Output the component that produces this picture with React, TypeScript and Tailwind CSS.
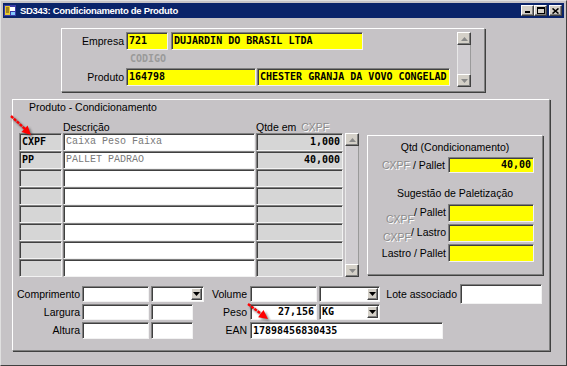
import React from 'react';

const sans = "font-['Liberation_Sans',Arial,sans-serif]";
const mono = "font-['DejaVu_Sans_Mono',monospace]";
const sunken =
  'border border-t-[#808080] border-l-[#808080] border-b-[#f2f2f2] border-r-[#f2f2f2] shadow-[inset_1px_1px_0_#404040]';
const raised =
  'border border-t-[#ffffff] border-l-[#ffffff] border-b-[#404040] border-r-[#404040] shadow-[inset_-1px_-1px_0_#808080]';
const groupBox =
  'border border-t-[#ffffff] border-l-[#ffffff] border-b-[#808080] border-r-[#808080] shadow-[1px_1px_0_#404040]';
const dim = 'text-[#8c8c8c] [text-shadow:1px_1px_0_#ffffff]';

const ROWS = [
  { code: 'CXPF', desc: 'Caixa Peso Faixa', qtd: '1,000' },
  { code: 'PP', desc: 'PALLET PADRAO', qtd: '40,000' },
  {},
  {},
  {},
  {},
  {},
  {},
] as { code?: string; desc?: string; qtd?: string }[];

function Field({ className = '', right = false, children }: { className?: string; right?: boolean; children?: React.ReactNode }) {
  return (
    <div
      className={`${sunken} ${className} flex items-center ${right ? 'justify-end' : ''} overflow-hidden whitespace-nowrap px-[2px] ${mono} text-[10px] font-bold text-black leading-none`}
    >
      {children}
    </div>
  );
}

function DropBtn() {
  return (
    <div className={`${raised} bg-[#d4d0c8] w-[11px] h-[12px] flex items-center justify-center shrink-0`}>
      <svg width="7" height="4" viewBox="0 0 7 4">
        <path d="M0 0h7L3.5 4z" fill="#000" />
      </svg>
    </div>
  );
}

function Select({ className = '', value = '' }: { className?: string; value?: string }) {
  return (
    <div className={`${sunken} ${className} bg-white flex items-center justify-between pl-[2px] pr-[1px]`}>
      <span className={`${mono} text-[10px] font-bold leading-none`}>{value}</span>
      <DropBtn />
    </div>
  );
}

function ScrollBtn({ up = false }: { up?: boolean }) {
  return (
    <div className={`${raised} bg-[#d4d0c8] h-[13px] flex items-center justify-center shrink-0`}>
      <svg width="7" height="4" viewBox="0 0 7 4">
        <path d={up ? 'M3.5 0L7 4H0z' : 'M0 0h7L3.5 4z'} fill="#8a8a8a" />
      </svg>
    </div>
  );
}

function ScrollBar({ className = '' }: { className?: string }) {
  return (
    <div className={`flex flex-col ${className}`}>
      <ScrollBtn up />
      <div className="flex-1 bg-[#cfccd0] border-x border-l-[#e8e8e8] border-r-[#9a9a9a]" />
      <ScrollBtn />
    </div>
  );
}

function RedArrow({ className, line, head, w, h }: { className: string; line: string; head: string; w: number; h: number }) {
  return (
    <svg className={className} width={w} height={h} viewBox={`0 0 ${w} ${h}`}>
      <defs>
        <filter id="blur" x="-30%" y="-30%" width="160%" height="160%">
          <feGaussianBlur stdDeviation="1.2" />
        </filter>
      </defs>
      <g transform="translate(2 2)" filter="url(#blur)" opacity="0.55">
        <path d={line} stroke="#333" strokeWidth="2.4" fill="none" />
        <path d={head} fill="#333" />
      </g>
      <path d={line} stroke="#ff0000" strokeWidth="2.4" fill="none" strokeDasharray="3 1" />
      <path d={head} fill="#ff0000" />
    </svg>
  );
}

export default function App() {
  return (
    <div
      className={`relative w-[567px] h-[366px] overflow-hidden bg-[#c6c3c6] p-[2px] border border-t-[#e0e0e0] border-l-[#e0e0e0] border-r-[#404040] border-b-[#404040] ${sans} text-[10.5px] text-black`}
    >
      {/* title bar */}
      <div className="h-[15px] bg-[#0a246a] flex items-center pl-[1px] pr-[2px]">
        <svg width="12" height="11" viewBox="0 0 12 11">
          <rect width="12" height="11" fill="#3c3ca8" />
          <rect x="1" y="1" width="5" height="9" fill="#e8c830" />
          <rect x="6" y="2" width="5" height="4" fill="#ffffff" />
          <path d="M7 7h4v3H7z" fill="#80c8ff" />
          <path d="M2 3h3M2 5h3M2 7h3" stroke="#5a3a10" strokeWidth="1" />
        </svg>
        <span className="ml-[4px] text-white font-bold text-[9.5px] tracking-[-0.3px] leading-none">
          SD343: Condicionamento de Produto
        </span>
        <div className="ml-auto flex items-center">
          <div className={`${raised} bg-[#d4d0c8] w-[13px] h-[11px] flex items-end justify-center pb-[2px]`}>
            <div className="w-[5px] h-[2px] bg-black" />
          </div>
          <div className={`${raised} bg-[#d4d0c8] w-[13px] h-[11px] flex items-center justify-center`}>
            <div className="w-[8px] h-[7px] border border-black border-t-2" />
          </div>
          <div className={`${raised} bg-[#d4d0c8] w-[13px] h-[11px] ml-[2px] flex items-center justify-center`}>
            <svg width="7" height="6" viewBox="0 0 7 6">
              <path d="M0.5 0.5l6 5M6.5 0.5l-6 5" stroke="#000" strokeWidth="1.6" />
            </svg>
          </div>
        </div>
      </div>

      {/* Empresa / Produto */}
      <div className={`${groupBox} mt-[10px] ml-[58px] w-[424px] h-[64px] flex pt-[3px]`}>
        <div className="w-[388px] flex flex-col">
          <div className="h-[18px] flex items-center">
            <span className="w-[62px] text-right leading-none">Empresa</span>
            <Field className="ml-[2px] w-[42px] h-[18px] bg-[#ffff00]">721</Field>
            <Field className="ml-[3px] w-[192px] h-[18px] bg-[#ffff00]">DUJARDIN DO BRASIL LTDA</Field>
          </div>
          <div className={`h-[18px] flex items-center pl-[68px] ${mono} text-[10px] font-bold text-[#9a9a9a] leading-none`}>
            CODIGO
          </div>
          <div className="h-[18px] flex items-center">
            <span className="w-[62px] text-right leading-none">Produto</span>
            <Field className="ml-[2px] w-[130px] h-[18px] bg-[#ffff00]">164798</Field>
            <Field className="ml-[1px] w-[193px] h-[18px] bg-[#ffff00]">CHESTER GRANJA DA VOVO CONGELAD</Field>
          </div>
        </div>
        <ScrollBar className="ml-[7px] w-[14px] h-[55px]" />
      </div>

      {/* Produto - Condicionamento */}
      <div className={`${groupBox} mt-[7px] ml-[9px] w-[538px] h-[252px] pt-[1px]`}>
        <div className="h-[12px] pl-[16px] leading-[12px]">Produto - Condicionamento</div>
        <div className="h-[20px] flex items-end pl-[50px] leading-[12px]">
          <span className="w-[193px]">Descrição</span>
          <span>Qtde em</span>
          <span className={`ml-[5px] ${dim}`}>CXPF</span>
        </div>

        <div className="flex pl-[6px]">
          <div className="flex flex-col">
            {ROWS.map((r, i) => (
              <div key={i} className="h-[18px] flex">
                <Field className="w-[43px] h-[18px] bg-[#d6d6d6]">{r.code}</Field>
                <div
                  className={`${sunken} ml-[1px] w-[192px] h-[18px] bg-white flex items-center pl-[2px] font-['Liberation_Mono',monospace] text-[10px] text-[#7a7a7a] leading-none whitespace-nowrap`}
                >
                  {r.desc}
                </div>
                <Field right className="ml-[1px] w-[87px] h-[18px] bg-[#d6d6d6]">
                  {r.qtd}
                </Field>
              </div>
            ))}
          </div>
          <ScrollBar className="ml-[2px] w-[14px] h-[144px]" />

          <div className={`${groupBox} ml-[8px] mt-[2px] w-[176px] h-[140px] flex flex-col`}>
            <div className="mt-[5px] h-[12px] leading-[12px] text-center">Qtd (Condicionamento)</div>
            <div className="mt-[4px] h-[16px] flex items-center justify-end pr-[8px]">
              <span className="leading-none">
                <span className={dim}>CXPF</span> / Pallet
              </span>
              <Field right className="ml-[3px] w-[86px] h-[16px] bg-[#ffff00]">
                40,00
              </Field>
            </div>
            <div className="mt-[14px] h-[12px] leading-[12px] text-center">Sugestão de Paletização</div>
            <div className="mt-[5px] flex flex-col gap-[2px] pr-[8px]">
              <div className="h-[18px] flex justify-end">
                <div className="flex items-start leading-[12px]">
                  <span className={`mt-[9px] ${dim}`}>CXPF</span>
                  <span className="mt-[2px]">/ Pallet</span>
                </div>
                <Field className="ml-[2px] w-[86px] h-[18px] bg-[#ffff00]" />
              </div>
              <div className="h-[18px] flex justify-end">
                <div className="flex items-start leading-[12px]">
                  <span className={`mt-[7px] ${dim}`}>CXPF</span>
                  <span className="mt-[2px]">/ Lastro</span>
                </div>
                <Field className="ml-[2px] w-[86px] h-[18px] bg-[#ffff00]" />
              </div>
              <div className="h-[18px] flex justify-end items-center">
                <span className="leading-none">Lastro / Pallet</span>
                <Field className="ml-[2px] w-[86px] h-[18px] bg-[#ffff00]" />
              </div>
            </div>
          </div>
        </div>

        {/* dimensions */}
        <div className="mt-[9px] pl-[1px] flex flex-col gap-[2px]">
          <div className="h-[16px] flex items-center">
            <span className="w-[66px] text-right leading-none">Comprimento</span>
            <Field className="ml-[2px] w-[67px] h-[16px] bg-white" />
            <Select className="ml-[2px] w-[53px] h-[16px]" />
            <span className="w-[43px] text-right leading-none">Volume</span>
            <Field className="ml-[3px] w-[67px] h-[16px] bg-white" />
            <Select className="ml-[2px] w-[61px] h-[16px]" />
            <span className="w-[77px] text-right leading-none">Lote associado</span>
            <Field className="ml-[3px] w-[82px] h-[20px] bg-white" />
          </div>
          <div className="h-[16px] flex items-center">
            <span className="w-[66px] text-right leading-none">Largura</span>
            <Field className="ml-[2px] w-[67px] h-[16px] bg-white" />
            <Field className="ml-[2px] w-[42px] h-[16px] bg-white" />
            <span className="w-[54px] text-right leading-none">Peso</span>
            <Field right className="ml-[3px] w-[67px] h-[16px] bg-white">
              27,156
            </Field>
            <Select className="ml-[2px] w-[61px] h-[16px]" value="KG" />
          </div>
          <div className="h-[17px] flex items-center">
            <span className="w-[66px] text-right leading-none">Altura</span>
            <Field className="ml-[2px] w-[67px] h-[17px] bg-white" />
            <Field className="ml-[2px] w-[42px] h-[17px] bg-white" />
            <span className="w-[54px] text-right leading-none">EAN</span>
            <Field className="ml-[3px] w-[193px] h-[17px] bg-white">17898456830435</Field>
          </div>
        </div>
      </div>

      {/* annotation arrows */}
      <RedArrow
        className="absolute left-[8px] top-[113px]"
        w={28}
        h={26}
        line="M2 2L16 15"
        head="M22 21L12.4 18.1L18.6 11.5z"
      />
      <RedArrow
        className="absolute left-[245px] top-[301px]"
        w={28}
        h={22}
        line="M2 2L15.5 12.1"
        head="M22 17L12.1 15.2L17.5 8z"
      />
    </div>
  );
}
